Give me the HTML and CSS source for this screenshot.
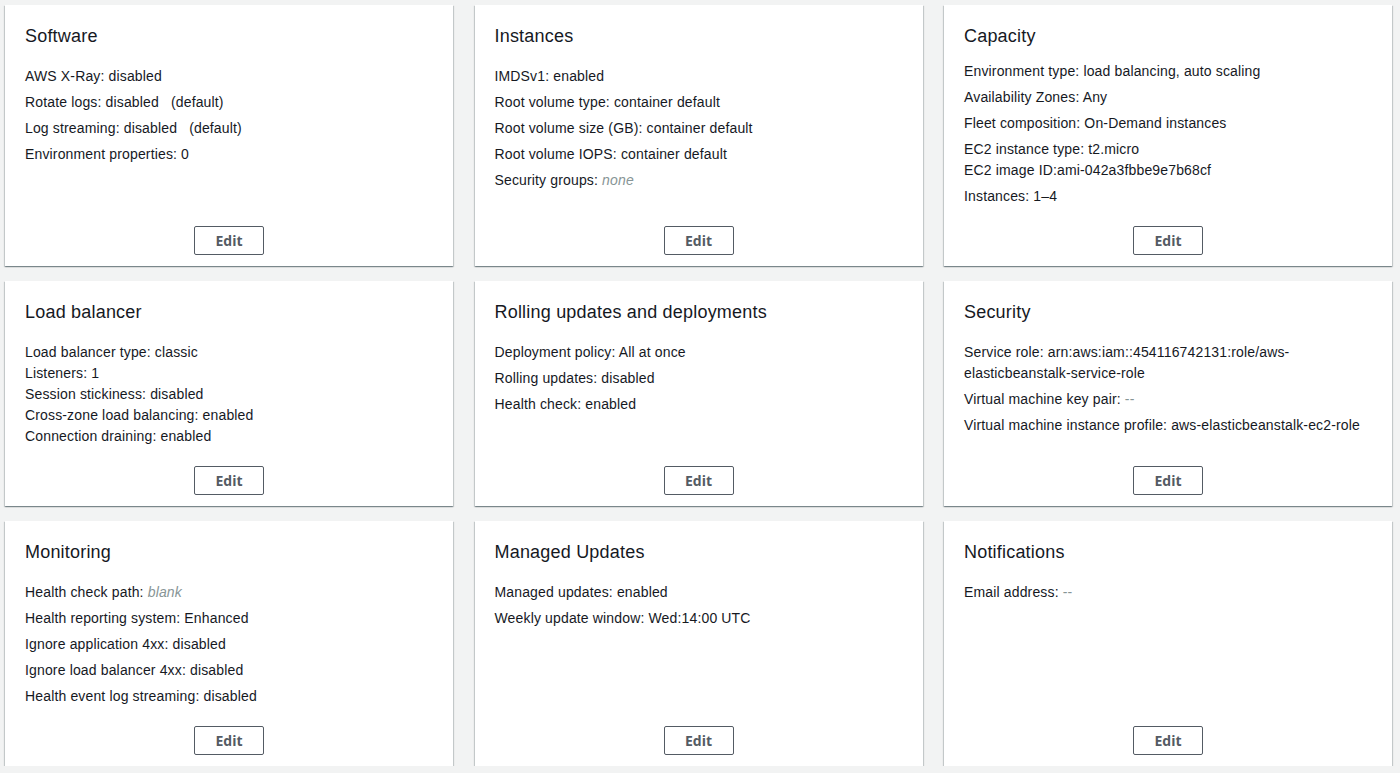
FILE: index.html
```html
<!DOCTYPE html>
<html lang="en">
<head>
<meta charset="utf-8">
<title>Configuration</title>
<link rel="stylesheet" href="styles.css">
</head>
<body>
<div class="grid">
  <section class="card">
    <h2 class="card-title">Software</h2>
    <div class="card-body">
      <p>AWS X-Ray: disabled</p>
      <p>Rotate logs: disabled <span class="note">(default)</span></p>
      <p>Log streaming: disabled <span class="note">(default)</span></p>
      <p>Environment properties: 0</p>
    </div>
    <button class="edit">Edit</button>
  </section>
  <section class="card">
    <h2 class="card-title">Instances</h2>
    <div class="card-body">
      <p>IMDSv1: enabled</p>
      <p>Root volume type: container default</p>
      <p>Root volume size (GB): container default</p>
      <p>Root volume IOPS: container default</p>
      <p>Security groups: <span class="muted">none</span></p>
    </div>
    <button class="edit">Edit</button>
  </section>
  <section class="card">
    <h2 class="card-title">Capacity</h2>
    <div class="card-body card-body--tight">
      <p>Environment type: load balancing, auto scaling</p>
      <p>Availability Zones: Any</p>
      <p>Fleet composition: On-Demand instances</p>
      <p>EC2 instance type: t2.micro<br>EC2 image ID:ami-042a3fbbe9e7b68cf</p>
      <p>Instances: 1–4</p>
    </div>
    <button class="edit">Edit</button>
  </section>

  <section class="card">
    <h2 class="card-title">Load balancer</h2>
    <div class="card-body">
      <p>Load balancer type: classic<br>Listeners: 1<br>Session stickiness: disabled<br>Cross-zone load balancing: enabled<br>Connection draining: enabled</p>
    </div>
    <button class="edit">Edit</button>
  </section>
  <section class="card">
    <h2 class="card-title">Rolling updates and deployments</h2>
    <div class="card-body">
      <p>Deployment policy: All at once</p>
      <p>Rolling updates: disabled</p>
      <p>Health check: enabled</p>
    </div>
    <button class="edit">Edit</button>
  </section>
  <section class="card">
    <h2 class="card-title">Security</h2>
    <div class="card-body">
      <p>Service role: arn:aws:iam::454116742131:role/aws-<br>elasticbeanstalk-service-role</p>
      <p>Virtual machine key pair: <span class="dash">--</span></p>
      <p>Virtual machine instance profile: aws-elasticbeanstalk-ec2-role</p>
    </div>
    <button class="edit">Edit</button>
  </section>

  <section class="card">
    <h2 class="card-title">Monitoring</h2>
    <div class="card-body">
      <p>Health check path: <span class="muted">blank</span></p>
      <p>Health reporting system: Enhanced</p>
      <p>Ignore application 4xx: disabled</p>
      <p>Ignore load balancer 4xx: disabled</p>
      <p>Health event log streaming: disabled</p>
    </div>
    <button class="edit">Edit</button>
  </section>
  <section class="card">
    <h2 class="card-title">Managed Updates</h2>
    <div class="card-body">
      <p>Managed updates: enabled</p>
      <p>Weekly update window: Wed:14:00 UTC</p>
    </div>
    <button class="edit">Edit</button>
  </section>
  <section class="card">
    <h2 class="card-title">Notifications</h2>
    <div class="card-body">
      <p>Email address: <span class="dash">--</span></p>
    </div>
    <button class="edit">Edit</button>
  </section>
</div>
</body>
</html>
```

FILE: styles.css
```css
html, body {
  margin: 0;
  background: #f2f3f3;
}
body {
  padding: 5px 0 0 5px;
  font-family: "Liberation Sans", Arial, sans-serif;
  font-size: 14px;
  color: #16191f;
}
.grid {
  display: grid;
  grid-template-columns: repeat(3, 448px);
  column-gap: 21.5px;
  row-gap: 15px;
}
.card {
  background: #fff;
  box-shadow: 0 1px 1px 0 rgba(0, 28, 36, 0.3), 1px 1px 1px 0 rgba(0, 28, 36, 0.15), -1px 1px 1px 0 rgba(0, 28, 36, 0.15);
  padding: 20px 20px 11px;
  display: flex;
  flex-direction: column;
}
.card-title {
  margin: 0;
  font-size: 18px;
  line-height: 22px;
  font-weight: 400;
  letter-spacing: 0.2px;
  color: #16191f;
}
.card-body {
  margin-top: 18.5px;
  margin-bottom: 19.5px;
  letter-spacing: 0.15px;
}
.card-body--tight {
  margin-top: 13.5px;
}
.card-body p {
  margin: 5px 0 0;
  line-height: 21px;
}
.card-body p:first-child {
  margin-top: 0;
}
.note {
  margin-left: 8px;
}
.muted {
  color: #879596;
  font-style: italic;
}
.dash {
  color: #879596;
}
.edit {
  margin-top: auto;
  align-self: center;
  width: 70px;
  height: 29px;
  padding: 0;
  background: #fff;
  border: 1px solid #545b64;
  border-radius: 2px;
  color: #545b64;
  font-family: "Open Sans", "Liberation Sans", sans-serif;
  font-weight: 700;
  font-size: 14px;
  cursor: pointer;
}
```
